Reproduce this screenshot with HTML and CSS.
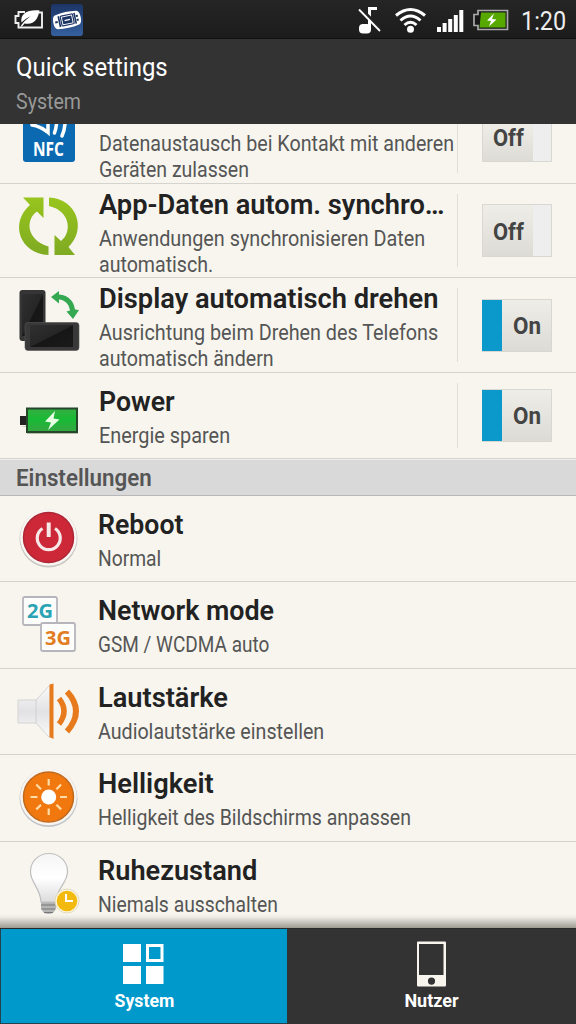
FILE: index.html
```html
<!DOCTYPE html>
<html lang="de">
<head>
<meta charset="utf-8">
<title>Quick settings</title>
<link rel="stylesheet" href="styles.css">
</head>
<body>
<div class="screen">
  <div class="statusbar">
    <svg class="st-left" width="100" height="39" viewBox="0 0 100 39">
      <defs><linearGradient id="blue" x1="0" y1="0" x2="0" y2="1"><stop offset="0" stop-color="#1c3565"/><stop offset="1" stop-color="#35609f"/></linearGradient></defs>
      <path d="M25 12H18.500V16H15.500V23H18.500V27.500H42V12.500H39" fill="none" stroke="#eee" stroke-width="1.900"/>
      <path d="M20.500 26.500C24 21 27 19 31 16C27 18 24 20 21.500 22.500C20 14 27 9.500 39.500 10.500C38 19 34 25.500 24.500 23.500L22 26.500Z" fill="#fff"/>
      <rect x="51" y="4" width="32" height="32" rx="3" fill="url(#blue)"/>
      <g transform="rotate(-12 67 20)">
        <path d="M56 13Q67 11 78 13Q81 14 81 20Q81 26 78 27Q67 29 56 27Q53 26 53 20Q53 14 56 13Z" fill="#fff"/>
        <path d="M59.200 14.500V25.500M75.300 14.500V25.500" stroke="#1c3565" stroke-width="1.600"/>
        <rect x="61" y="15" width="12.500" height="10" rx="1" fill="#fff" stroke="#1c3565" stroke-width="1.200"/>
        <rect x="62.500" y="16.500" width="9.500" height="7" fill="#1c3565"/>
        <path d="M64.500 20H70" stroke="#fff" stroke-width="1.300"/>
        <path d="M55 20H57.500M77.500 17V19M77.500 21V23" stroke="#1c3565" stroke-width="2"/>
      </g>
    </svg>
    <svg class="st-right" width="165" height="39" viewBox="355 0 165 39">
      <path d="M369.500 29V8.500H377" fill="none" stroke="#fff" stroke-width="3"/>
      <rect x="359" y="24" width="12" height="9.500" rx="4" fill="#fff"/>
      <path d="M360.500 8L381 29" stroke="#222" stroke-width="3"/>
      <path d="M359 9.500L380 31" stroke="#fff" stroke-width="1.800"/>
      <g fill="none" stroke="#fff" stroke-width="3">
        <path d="M396 15.500Q410.500 3.500 425 15.500"/><path d="M400.500 20.500Q410.500 11.500 420.500 20.500"/><path d="M404.500 25Q410.500 19.500 416.500 25"/>
      </g>
      <circle cx="410.500" cy="29.300" r="3.500" fill="#fff"/>
      <path d="M437 27h4v5h-4zM442.600 23h4v9h-4zM448.200 19h4v13h-4zM453.800 15h4v17h-4zM459.300 10h4v22h-4z" fill="#fff"/>
      <path d="M478 10.500H507.500V29.500H478V25.500H474V14.500H478Z" fill="#181818" stroke="#aaa" stroke-width="1.700"/>
      <path d="M481 12.500H505.500V27.500H479.500Z" fill="#57a900"/>
      <path d="M494 13.500L487 20.500L491 21L489 26.500L496.500 19.500L492 19Z" fill="#fff"/>
    </svg>
    <div class="clock"><span class="t" data-w="45">1:20</span></div>
  </div>
  <div class="appbar">
    <div class="app-title"><span class="t" data-w="152">Quick settings</span></div>
    <div class="app-sub"><span class="t" data-w="65">System</span></div>
  </div>
  <div class="list">
    <div class="row r-nfc">
      <svg class="icon" width="96" height="59" viewBox="0 124 96 59">
        <path d="M23 124H75V159Q75 162 72 162H26Q23 162 23 159Z" fill="#0b69b1"/>
        <g fill="none" stroke="#fff" stroke-width="3.500" stroke-linecap="round"><path d="M32 125Q40 126 48 132.500V124"/><path d="M56.500 124Q56 129 54.500 133"/><path d="M65 124Q64.500 130 62 136"/></g>
        <text x="33" y="155.500" class="nfc" textLength="31" lengthAdjust="spacingAndGlyphs">NFC</text>
      </svg>
      <div class="text">
        <div class="sub"><span class="t" data-w="355">Datenaustausch bei Kontakt mit anderen</span></div>
        <div class="sub"><span class="t" data-w="150">Geräten zulassen</span></div>
      </div>
      <div class="switch-cell"><div class="switch off"><span class="knob"><span class="t" data-w="31">Off</span></span></div></div>
    </div>
    <div class="row r-sync">
      <svg class="icon" width="96" height="94" viewBox="0 184 96 94">
        <defs><linearGradient id="lime" x1="0" y1="0" x2="0" y2="1"><stop offset="0" stop-color="#98c51d"/><stop offset="1" stop-color="#7faa23"/></linearGradient></defs>
        <path d="M23 197.500H43.500V218L37 211.500C26 219 25 239 48.500 246.500V255C20 254 9 223 30 205Z" fill="url(#lime)"/>
        <path d="M49 197.500C77 199 87 229 68.500 247L75 255H54.500V235L61 241C72 233 71 211 49 206Z" fill="url(#lime)"/>
      </svg>
      <div class="text two">
        <div class="title"><span class="t" data-w="346">App-Daten autom. synchro…</span></div>
        <div class="sub"><span class="t" data-w="326">Anwendungen synchronisieren Daten</span></div>
        <div class="sub"><span class="t" data-w="114">automatisch.</span></div>
      </div>
      <div class="switch-cell"><div class="switch off"><span class="knob"><span class="t" data-w="31">Off</span></span></div></div>
    </div>
    <div class="row r-rotate">
      <svg class="icon" width="96" height="95" viewBox="0 278 96 95">
        <defs><linearGradient id="ph" x1="0" y1="0" x2="1" y2="1"><stop offset="0" stop-color="#303030"/><stop offset=".5" stop-color="#262626"/><stop offset=".51" stop-color="#161616"/><stop offset="1" stop-color="#1a1a1a"/></linearGradient></defs>
        <rect x="19.500" y="290" width="26" height="51" rx="3" fill="#353535"/>
        <rect x="22" y="294" width="21" height="42" fill="url(#ph)"/>
        <rect x="25" y="322.500" width="54" height="28" rx="3" fill="#393939" stroke="#555" stroke-width=".6"/>
        <rect x="30" y="325" width="43" height="22" fill="url(#ph)"/>
        <path d="M51 297L59 291V294.500C69 295 74 302 75 309.500L79 310L73 319L66.500 311.500L70 310.500C69 304 65 300 59 299.500V303.500Z" fill="#35a852"/>
      </svg>
      <div class="text two">
        <div class="title"><span class="t" data-w="339">Display automatisch drehen</span></div>
        <div class="sub"><span class="t" data-w="339">Ausrichtung beim Drehen des Telefons</span></div>
        <div class="sub"><span class="t" data-w="175">automatisch ändern</span></div>
      </div>
      <div class="switch-cell"><div class="switch on"><span class="knob"><span class="t" data-w="28">On</span></span></div></div>
    </div>
    <div class="row r-power">
      <svg class="icon" width="96" height="86" viewBox="0 373 96 86">
        <defs><linearGradient id="gr" x1="0" y1="0" x2="0" y2="1"><stop offset="0" stop-color="#38ae44"/><stop offset=".45" stop-color="#18ba35"/><stop offset="1" stop-color="#36a642"/></linearGradient></defs>
        <path d="M20 426H78V434H27V427Z" fill="#bbb8ae"/>
        <rect x="20" y="416" width="7" height="9" fill="#222"/>
        <rect x="27" y="408.500" width="50" height="23.500" fill="url(#gr)" stroke="#234728" stroke-width="2"/>
        <path d="M55 411L45 421.500L51 422.500L48 430L59.500 419.500L53.500 418.500Z" fill="#e8ffe6"/>
      </svg>
      <div class="text one">
        <div class="title"><span class="t" data-w="76">Power</span></div>
        <div class="sub"><span class="t" data-w="131">Energie sparen</span></div>
      </div>
      <div class="switch-cell"><div class="switch on"><span class="knob"><span class="t" data-w="28">On</span></span></div></div>
    </div>
    <div class="section"><span class="t" data-w="136">Einstellungen</span></div>
    <div class="row plain">
      <svg class="icon" width="96" height="85" viewBox="0 496 96 85">
        <circle cx="48.500" cy="538.500" r="29" fill="#c9c7c2"/><circle cx="48.500" cy="537.500" r="28.300" fill="#f8f5f2"/>
        <circle cx="48.500" cy="537.500" r="25" fill="#cc2838" stroke="#ad2635" stroke-width="1.500"/>
        <path d="M42.500 528.500A11.500 11.500 0 1 0 55 528.500" fill="none" stroke="#f7e9e7" stroke-width="3.200"/><path d="M48.700 522.500V537" stroke="#f7e9e7" stroke-width="4"/>
      </svg>
      <div class="text one">
        <div class="title"><span class="t" data-w="86">Reboot</span></div>
        <div class="sub"><span class="t" data-w="63">Normal</span></div>
      </div>
    </div>
    <div class="row plain">
      <svg class="icon" width="96" height="85" viewBox="0 582 96 85">
        <rect x="23" y="597" width="34" height="28" rx="2" fill="#fdfdfc" stroke="#b5b5bb" stroke-width="1.800"/>
        <text x="27" y="618" class="g2" textLength="26" lengthAdjust="spacingAndGlyphs">2G</text>
        <rect x="41" y="623" width="34" height="28" rx="2" fill="#fdfdfc" stroke="#b5b5bb" stroke-width="1.800"/>
        <text x="45" y="644.500" class="g3" textLength="26" lengthAdjust="spacingAndGlyphs">3G</text>
      </svg>
      <div class="text one">
        <div class="title"><span class="t" data-w="176">Network mode</span></div>
        <div class="sub"><span class="t" data-w="171">GSM / WCDMA auto</span></div>
      </div>
    </div>
    <div class="row plain">
      <svg class="icon" width="96" height="85" viewBox="0 668 96 85">
        <defs><linearGradient id="sp" x1="0" y1="0" x2="0" y2="1"><stop offset="0" stop-color="#fafafa"/><stop offset=".5" stop-color="#e2e2e4"/><stop offset="1" stop-color="#fbfbfb"/></linearGradient></defs>
        <path d="M18 699H36L50 684V737L36 722H18Z" fill="url(#sp)" stroke="#d4d4d4"/>
        <path d="M36 699V722" stroke="#d0d0d0"/>
        <path d="M49.500 683.500L53.500 682.500V738L49.500 736Z" fill="#e67a1d"/>
        <path d="M59 697.500Q69 710 59 723" fill="none" stroke="#e67a1d" stroke-width="5.500"/>
        <path d="M67 690.500Q85 710 67 730.500" fill="none" stroke="#e67a1d" stroke-width="5.800"/>
      </svg>
      <div class="text one">
        <div class="title"><span class="t" data-w="130">Lautstärke</span></div>
        <div class="sub"><span class="t" data-w="226">Audiolautstärke einstellen</span></div>
      </div>
    </div>
    <div class="row plain">
      <svg class="icon" width="96" height="85" viewBox="0 755 96 85">
        <circle cx="48.500" cy="798" r="29" fill="#c0c4c9"/><circle cx="48.500" cy="797" r="28.300" fill="#f8f5f1"/>
        <circle cx="48.500" cy="797" r="25" fill="#f0780f" stroke="#c06a20" stroke-width="1.500"/>
        <circle cx="48.700" cy="797" r="7.500" fill="#fff"/>
        <path d="M48.700 779V785.500M48.700 808.500V815M30.500 797H37.500M60 797H67M36.300 784.500L41 789.200M56.400 804.700L61.100 809.400M36.300 809.400L41 804.700M56.400 789.200L61.100 784.500" stroke="#ffdca6" stroke-width="2.200"/>
      </svg>
      <div class="text one">
        <div class="title"><span class="t" data-w="116">Helligkeit</span></div>
        <div class="sub"><span class="t" data-w="313">Helligkeit des Bildschirms anpassen</span></div>
      </div>
    </div>
    <div class="row last">
      <svg class="icon" width="96" height="86" viewBox="0 842 96 86">
        <defs><linearGradient id="bu" x1="0" y1="0" x2="0" y2="1"><stop offset="0" stop-color="#f5f5f5"/><stop offset=".5" stop-color="#fff"/><stop offset="1" stop-color="#dcdcdc"/></linearGradient></defs>
        <path d="M41 902H56V909L53 913Q48.500 915 44 913L41 909Z" fill="#b5b5b5"/>
        <path d="M41 905H56M41.500 909H55M44 912.500H53" stroke="#777" stroke-width="1"/>
        <path d="M49 853.500C38 853.500 30.500 862 30.500 871.500C30.500 883 40.500 888 41 902H56C56.500 888 67.500 883 67.500 871.500C67.500 862 60 853.500 49 853.500Z" fill="url(#bu)" stroke="#bfbfbf" stroke-width="1.200"/>
        <circle cx="67" cy="901" r="12" fill="#fbf6e2" stroke="#dcd2b0" stroke-width=".8"/><circle cx="67" cy="901" r="10.300" fill="#f2b90e"/>
        <path d="M66 894V901H73" fill="none" stroke="#fff" stroke-width="2"/>
      </svg>
      <div class="text one">
        <div class="title"><span class="t" data-w="159">Ruhezustand</span></div>
        <div class="sub"><span class="t" data-w="180">Niemals ausschalten</span></div>
      </div>
    </div>
  </div>
  <div class="tabs">
    <div class="tab active">
      <svg width="42" height="46" viewBox="123 941 42 46"><path d="M123 944h18v18h-18zM123 966h18v18h-18zM146 966h17.500v18h-17.500z" fill="#fff"/><rect x="147.500" y="945.500" width="14.500" height="15" fill="none" stroke="#fff" stroke-width="3"/></svg>
      <div class="tab-label"><span class="c" data-w="60">System</span></div>
    </div>
    <div class="tab">
      <svg width="42" height="46" viewBox="411 941 42 46"><path fill-rule="evenodd" d="M418 941.500H445Q446 941.500 446 942.500V985Q446 986.500 445 986.500H418Q417 986.500 417 985V942.500Q417 941.500 418 941.500ZM419 944V975H443.500V944ZM431.500 977.500A3.600 3.600 0 1 0 431.500 984.700A3.600 3.600 0 1 0 431.500 977.500Z" fill="#f7f5ee"/></svg>
      <div class="tab-label"><span class="c" data-w="54">Nutzer</span></div>
    </div>
  </div>
</div>
<script src="script.js"></script>
</body>
</html>
```
FILE: styles.css
```css
* { box-sizing: border-box; }
body { margin: 0; background: #333; font-family: Roboto, "Liberation Sans", sans-serif; }
.screen { width: 576px; height: 1024px; display: flex; flex-direction: column; overflow: hidden; background: #f7f5ee; }
.t, .c { display: inline-block; white-space: nowrap; transform-origin: left center; }
.c { transform-origin: center; }
.statusbar { height: 39px; flex: none; display: flex; background: linear-gradient(#252525, #1c1c1c); border-bottom: 1px solid #111; }
.st-left { margin-right: 255px; flex: none; }
.st-right { flex: none; }
.clock { width: 46px; margin-left: 1px; flex: none; color: #eee; font-size: 26px; line-height: 43px; }
.appbar { height: 85px; flex: none; padding: 12px 16px; background: #333; }
.app-title { color: #fff; font-size: 26px; line-height: 32px; }
.app-sub { color: #999; font-size: 22px; line-height: 26px; margin-top: 6px; }
.list { height: 804px; flex: none; background: linear-gradient(#f7f5ee 790px, #eeece5 793px, #9c9a91 804px); }
.row { display: flex; border-bottom: 1px solid #d5d3cd; overflow: hidden; }
.icon { flex: none; margin-right: 3px; }
.plain .icon, .last .icon { margin-right: 2px; }
.text { width: 358px; flex: none; }
.one { padding-top: 13px; }
.two { padding-top: 5px; }
.r-nfc { height: 60px; }
.r-nfc .text { padding-top: 7px; }
.r-sync { height: 94px; }
.r-rotate { height: 95px; }
.r-power { height: 86px; }
.plain { height: 86.400px; }
.last { height: 86px; border: 0; }
.title { color: #222; font-size: 27px; font-weight: 600; line-height: 32px; margin-bottom: 5px; white-space: nowrap; }
.sub { color: #555; font-size: 22px; line-height: 26px; white-space: nowrap; }
.switch-cell { flex: 1; margin: 10px 0; border-left: 1px solid #e0ded8; display: flex; align-items: center; padding-left: 24px; }
.switch { width: 70px; height: 53px; display: flex; border: 1px solid #d8d7d2; background: #eee; }
.knob { width: 50px; padding-left: 10px; background: linear-gradient(#eeede8, #dcdbd6); color: #444; font-size: 24px; font-weight: 700; line-height: 54px; }
.on { background: linear-gradient(90deg, #0b98cb 20px, #eee 20px); padding-left: 20px; border-left: 0; }
.on .knob { padding-left: 11px; line-height: 52px; }
.r-nfc .switch-cell { margin-top: 0; align-items: flex-start; }
.r-nfc .switch { height: 38px; border-top: 0; }
.r-nfc .knob { line-height: 28px; }
.section { height: 37px; padding-left: 16px; background: #d9d9d9; border-top: 1px solid #eee; border-bottom: 1px solid #b8b8b8; color: #555; font-size: 23px; font-weight: 600; line-height: 38px; }
.tabs { height: 96px; flex: none; display: grid; grid-template-columns: 287px 289px; background: #333; border-top: 1px solid #292929; }
.tab { display: flex; flex-direction: column; align-items: center; padding-top: 12px; }
.active { background: #0099cc; border-left: 1px solid #24434f; border-bottom: 1px solid #24434f; }
.tab-label { color: #fff; font-size: 18px; font-weight: 700; line-height: 22px; margin-top: 3px; }
.nfc { font: 700 19px "Open Sans", sans-serif; fill: #fff; }
.g2, .g3 { font: 700 20px "Open Sans", sans-serif; fill: #29a3b5; }
.g3 { fill: #e27d23; }
```
FILE: script.js
```js
// Condense each label horizontally to its design width.
document.querySelectorAll('[data-w]').forEach(function (el) {
  el.style.transform = 'scaleX(' + el.dataset.w / el.offsetWidth + ')';
});
```
